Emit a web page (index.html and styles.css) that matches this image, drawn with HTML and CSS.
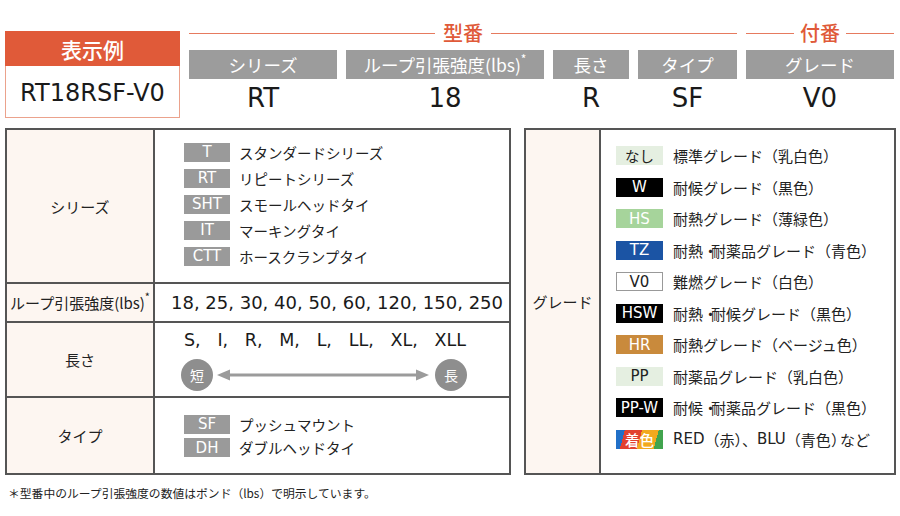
FILE: index.html
```html
<!DOCTYPE html>
<html lang="ja">
<head>
<meta charset="utf-8">
<link rel="stylesheet" href="styles.css">
</head>
<body>
<div class="page">
  <div class="top">
    <div class="example">
      <div class="example-head">表示例</div>
      <div class="example-body">RT18RSF-V0</div>
    </div>
    <div class="code">
      <div class="group g-model">型番</div>
      <div class="group g-suffix">付番</div>
      <div class="label">シリーズ</div>
      <div class="label">ループ引張強度(lbs)<sup>*</sup></div>
      <div class="label">長さ</div>
      <div class="label">タイプ</div>
      <div class="label">グレード</div>
      <div class="value">RT</div>
      <div class="value">18</div>
      <div class="value">R</div>
      <div class="value">SF</div>
      <div class="value">V0</div>
    </div>
  </div>

  <div class="tables">
    <div class="spec">
      <div class="head">シリーズ</div>
      <div class="cell list series">
        <div class="item"><span class="sbadge">T</span>スタンダードシリーズ</div>
        <div class="item"><span class="sbadge">RT</span>リピートシリーズ</div>
        <div class="item"><span class="sbadge">SHT</span>スモールヘッドタイ</div>
        <div class="item"><span class="sbadge">IT</span>マーキングタイ</div>
        <div class="item"><span class="sbadge">CTT</span>ホースクランプタイ</div>
      </div>

      <div class="head nowrap">ループ引張強度(lbs)<sup>*</sup></div>
      <div class="cell strength">
        <span>18,</span><span>25,</span><span>30,</span><span>40,</span><span>50,</span><span>60,</span><span>120,</span><span>150,</span><span>250</span>
      </div>

      <div class="head">長さ</div>
      <div class="cell length">
        <div class="sizes">
          <span>S,</span><span>I,</span><span>R,</span><span>M,</span><span>L,</span><span>LL,</span><span>XL,</span><span>XLL</span>
        </div>
        <div class="scale">
          <span class="circle">短</span>
          <svg class="arrow" width="212" height="14" viewBox="0 0 212 14">
            <line x1="10" y1="7" x2="202" y2="7" stroke="#9b9b9b" stroke-width="3"/>
            <polygon points="0,7 13,1.5 13,12.5" fill="#9b9b9b"/>
            <polygon points="212,7 199,1.5 199,12.5" fill="#9b9b9b"/>
          </svg>
          <span class="circle">長</span>
        </div>
      </div>

      <div class="head last">タイプ</div>
      <div class="cell list type last">
        <div class="item"><span class="sbadge">SF</span>プッシュマウント</div>
        <div class="item"><span class="sbadge">DH</span>ダブルヘッドタイ</div>
      </div>
    </div>

    <div class="grade">
      <div class="head last">グレード</div>
      <div class="grade-list">
        <div class="grow"><span class="gbadge g-none jp">なし</span>標準グレード（乳白色）</div>
        <div class="grow"><span class="gbadge g-black">W</span>耐候グレード（黒色）</div>
        <div class="grow"><span class="gbadge g-green">HS</span>耐熱グレード（薄緑色）</div>
        <div class="grow"><span class="gbadge g-blue">TZ</span>耐熱<span class="dot">・</span>耐薬品グレード（青色）</div>
        <div class="grow"><span class="gbadge g-white">V0</span>難燃グレード（白色）</div>
        <div class="grow"><span class="gbadge g-black">HSW</span>耐熱<span class="dot">・</span>耐候グレード（黒色）</div>
        <div class="grow"><span class="gbadge g-beige">HR</span>耐熱グレード（ベージュ色）</div>
        <div class="grow"><span class="gbadge g-none">PP</span>耐薬品グレード（乳白色）</div>
        <div class="grow"><span class="gbadge g-black">PP-W</span>耐候<span class="dot">・</span>耐薬品グレード（黒色）</div>
        <div class="grow"><span class="gbadge g-color jp">着色</span><span class="en">RED</span>（赤）、<span class="en">BLU</span>（青色<span class="tight">）</span>など</div>
      </div>
    </div>
  </div>

  <p class="note">＊型番中のループ引張強度の数値はポンド（lbs）で明示しています。</p>
</div>
</body>
</html>
```

FILE: styles.css
```css
* { box-sizing: border-box; }

body {
  margin: 0;
  background: #fff;
  color: #222;
  font-family: "Noto Sans CJK JP", "Noto Sans", sans-serif;
}

.page {
  width: 900px;
  padding-left: 5px;
}

/* ---------- top example ---------- */
.top {
  display: flex;
  gap: 9px;
  height: 128px;
}

.example {
  width: 175px;
  margin-top: 31px;
}

.example-head {
  height: 35px;
  background: #e05a39;
  color: #fff;
  font-size: 21px;
  font-weight: 500;
  display: flex;
  align-items: center;
  justify-content: center;
}

.example-body {
  height: 52px;
  border: 1px solid #eba28c;
  border-top: 0;
  font-family: "DejaVu Sans", "Noto Sans CJK JP", sans-serif;
  font-size: 24px;
  color: #1a1a1a;
  display: flex;
  align-items: center;
  justify-content: center;
  padding-top: 2px;
}

.code {
  display: grid;
  grid-template-columns: 148px 198px 76px 99px 148px;
  grid-template-rows: 20px 29px 24px;
  column-gap: 9px;
  row-gap: 7px;
  padding-top: 23px;
  align-content: start;
}

.group {
  display: flex;
  align-items: center;
  gap: 8px;
  color: #e05a39;
  font-size: 20px;
  font-weight: 500;
  line-height: 20px;
}
.group::before,
.group::after {
  content: "";
  flex: 1;
  height: 1px;
  background: #e67a5e;
}
.g-model { grid-column: 1 / 5; }
.g-suffix { grid-column: 5 / 6; gap: 6px; }

.label {
  background: #9c9c9c;
  color: #fff;
  font-size: 17.5px;
  display: flex;
  align-items: center;
  justify-content: center;
  white-space: nowrap;
}
.label sup {
  font-size: 12px;
  align-self: flex-start;
  margin-top: 3px;
  line-height: 1;
}

.value {
  font-family: "DejaVu Sans", "Noto Sans CJK JP", sans-serif;
  font-size: 26px;
  line-height: 24px;
  color: #1a1a1a;
  text-align: center;
}

/* ---------- tables ---------- */
.tables {
  display: flex;
  gap: 13px;
}

.spec {
  width: 506px;
  display: grid;
  grid-template-columns: 148px 1fr;
  grid-template-rows: 154px 39px 75px 75px;
  border: 2px solid #555;
}

.head {
  background: #fdf6f1;
  border-right: 2px solid #555;
  border-bottom: 2px solid #555;
  font-size: 15px;
  display: flex;
  align-items: center;
  justify-content: center;
}
.head.nowrap {
  white-space: nowrap;
  overflow: visible;
}
.head sup {
  font-size: 11px;
  align-self: flex-start;
  margin-top: 7px;
  line-height: 1;
}
.head.last { border-bottom: 0; }

.cell {
  border-bottom: 2px solid #555;
}
.cell.last { border-bottom: 0; }

.list {
  display: flex;
  flex-direction: column;
  justify-content: center;
  padding-left: 29px;
  font-size: 14.5px;
}
.series { padding-bottom: 4px; }
.series .item {
  height: 26px;
  display: flex;
  align-items: center;
  gap: 9px;
}
.type { padding-top: 1px; }
.type .item {
  height: 23.5px;
  display: flex;
  align-items: center;
  gap: 9px;
}

.sbadge {
  width: 46px;
  height: 19px;
  background: #9a9a9a;
  color: #fff;
  font-family: "DejaVu Sans", "Noto Sans CJK JP", sans-serif;
  font-size: 15px;
  display: flex;
  align-items: center;
  justify-content: center;
}

.strength {
  display: flex;
  align-items: center;
  justify-content: space-between;
  padding: 0 6px 0 16px;
  font-family: "DejaVu Sans", "Noto Sans CJK JP", sans-serif;
  font-size: 18px;
  color: #1a1a1a;
}

.length {
  padding: 6px 0 0 26px;
}
.sizes {
  display: flex;
  justify-content: space-between;
  width: 285px;
  margin-left: 3px;
  padding-right: 3px;
  font-family: "DejaVu Sans", "Noto Sans CJK JP", sans-serif;
  font-size: 17.5px;
  line-height: 22px;
  color: #1a1a1a;
}
.scale {
  display: flex;
  align-items: center;
  gap: 4px;
  margin-top: 8px;
}
.circle {
  width: 32px;
  height: 32px;
  border-radius: 50%;
  background: #8e8e8e;
  color: #fff;
  font-size: 14px;
  display: flex;
  align-items: center;
  justify-content: center;
}
.arrow { display: block; margin-right: 2px; }

/* ---------- grade ---------- */
.grade {
  width: 372px;
  height: 347px;
  display: grid;
  grid-template-columns: 75px 1fr;
  border: 2px solid #555;
}

.grade-list {
  padding: 10px 0 0 15px;
  display: flex;
  flex-direction: column;
}
.grow {
  height: 31.5px;
  display: flex;
  align-items: center;
  font-size: 15px;
  white-space: nowrap;
}
.grow .gbadge { margin-right: 10px; }
.dot { letter-spacing: -7px; }
.tight { letter-spacing: -6px; }
.en {
  font-family: "DejaVu Sans", "Noto Sans CJK JP", sans-serif;
  font-size: 15px;
}

.gbadge {
  width: 47px;
  height: 19px;
  font-family: "DejaVu Sans", "Noto Sans CJK JP", sans-serif;
  font-size: 15px;
  display: flex;
  align-items: center;
  justify-content: center;
  color: #fff;
}
.gbadge.jp { font-family: "Noto Sans CJK JP", sans-serif; font-size: 14.5px; }
.g-none { background: #e5efe1; color: #222; }
.g-black { background: #000; }
.g-green { background: #a6d49b; }
.g-blue { background: #1b54a4; }
.g-white { background: #fff; color: #222; border: 1px solid #999; }
.g-beige { background: #c98a3c; }
.g-color {
  background: linear-gradient(105deg, #2170c8 0 17%, #e2412f 17% 50%, #f2a91e 50% 82%, #41a44e 82% 100%);
  font-weight: 500;
}

.note {
  margin: 9px 0 0 3px;
  font-size: 11.8px;
  line-height: 17px;
}
```
